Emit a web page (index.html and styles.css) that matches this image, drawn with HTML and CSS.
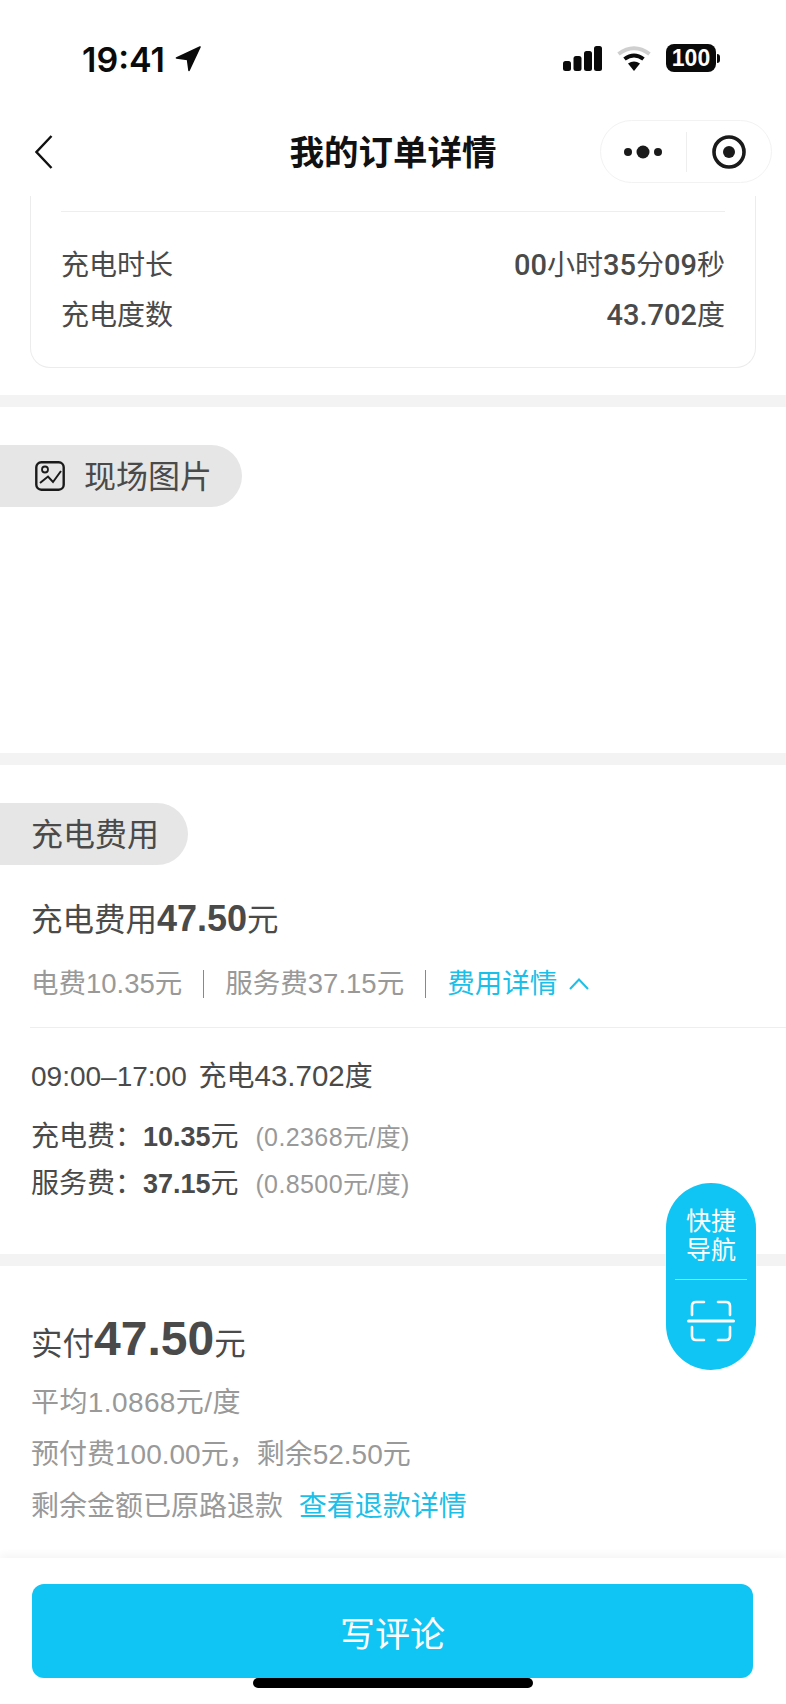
FILE: index.html
```html
<!DOCTYPE html>
<html lang="zh-CN">
<head>
    <meta charset="UTF-8">
    <meta name="viewport" content="width=device-width, initial-scale=1.0">
    <title>我的订单详情</title>
    <link rel="stylesheet" href="styles.css">
</head>
<body>
    <div class="phone">
        <div class="status-bar">
            <div class="status-time">
                <span>19:41</span>
                <svg class="icon-location" viewBox="0 0 26 26"><path d="M25 1 L1.500 12 L12.500 13.500 L14 24.500 Z" fill="#0a0a0a" stroke="#0a0a0a" stroke-width="1.600" stroke-linejoin="round"/></svg>
            </div>
            <div class="status-icons">
                <svg class="icon-signal" viewBox="0 0 39 25">
                    <rect x="0" y="15" width="8" height="10" rx="2.5" fill="#0a0a0a"/>
                    <rect x="10.500" y="10" width="8" height="15" rx="2.5" fill="#0a0a0a"/>
                    <rect x="21" y="5" width="8" height="20" rx="2.5" fill="#0a0a0a"/>
                    <rect x="31" y="0" width="8" height="25" rx="2.5" fill="#0a0a0a"/>
                </svg>
                <svg class="icon-wifi" viewBox="0 0 34 25">
                    <path d="M1.500 8 Q17 -3.500 32.500 8" fill="none" stroke="#cfcfcf" stroke-width="4"/>
                    <path d="M7.500 13 Q17 6 26.500 13" fill="none" stroke="#0a0a0a" stroke-width="4"/>
                    <path d="M11 17.500 Q17 13.500 23 17.500 L17 25 Z" fill="#0a0a0a"/>
                </svg>
                <div class="battery">
                    <span class="battery-body">100</span>
                    <span class="battery-nub"></span>
                </div>
            </div>
        </div>

        <div class="nav-bar">
            <svg class="icon-back" viewBox="0 0 18 34"><path d="M16.500 1 L1.500 17 L16.500 33" fill="none" stroke="#111" stroke-width="2.4"/></svg>
            <div class="nav-title">我的订单详情</div>
            <div class="capsule">
                <div class="capsule-part">
                    <svg class="icon-dots" viewBox="0 0 38 14">
                        <circle cx="4" cy="7" r="4" fill="#1a1a1a"/>
                        <circle cx="19" cy="7" r="6.500" fill="#1a1a1a"/>
                        <circle cx="34" cy="7" r="4" fill="#1a1a1a"/>
                    </svg>
                </div>
                <div class="capsule-line"></div>
                <div class="capsule-part">
                    <svg class="icon-target" viewBox="0 0 34 34">
                        <circle cx="17" cy="17" r="15" fill="none" stroke="#1a1a1a" stroke-width="3.600"/>
                        <circle cx="17" cy="17" r="6" fill="#1a1a1a"/>
                    </svg>
                </div>
            </div>
        </div>

        <div class="content">
            <section class="section section-charge">
                <div class="charge-card">
                    <div class="card-line"></div>
                    <div class="card-row">
                        <span>充电时长</span>
                        <span class="card-value"><b>00</b>小时<b>35</b>分<b>09</b>秒</span>
                    </div>
                    <div class="card-row">
                        <span>充电度数</span>
                        <span class="card-value"><b>43.702</b>度</span>
                    </div>
                </div>
            </section>

            <section class="section section-photo">
                <div class="pill pill-photo">
                    <svg class="icon-photo" viewBox="0 0 30 30">
                        <rect x="1.300" y="1.300" width="27.400" height="27.400" rx="5" fill="none" stroke="#1a1a1a" stroke-width="2.400"/>
                        <circle cx="10" cy="8.500" r="3" fill="none" stroke="#1a1a1a" stroke-width="1.800"/>
                        <path d="M5 22 L13 15.500 L18 21 L26 10" fill="none" stroke="#1a1a1a" stroke-width="2"/>
                    </svg>
                    <span>现场图片</span>
                </div>
            </section>

            <section class="section section-fee">
                <div class="pill pill-fee">充电费用</div>
                <div class="fee-total">充电费用<b>47.50</b>元</div>
                <div class="fee-sub">
                    <span>电费10.35元</span>
                    <i class="fee-sep"></i>
                    <span>服务费37.15元</span>
                    <i class="fee-sep"></i>
                    <span class="link">费用详情</span>
                    <svg class="icon-up" viewBox="0 0 20 12"><path d="M1 11 L10 1.500 L19 11" fill="none" stroke="#1cbfe8" stroke-width="2"/></svg>
                </div>
                <div class="fee-line"></div>
                <div class="fee-period">09:00–17:00 充电<span class="fee-kwh">43.702</span>度</div>
                <div class="fee-item fee-item-first">
                    <span>充电费：</span><b>10.35</b>元
                    <span class="fee-rate">(0.2368元/度)</span>
                </div>
                <div class="fee-item">
                    <span>服务费：</span><b>37.15</b>元
                    <span class="fee-rate">(0.8500元/度)</span>
                </div>
            </section>

            <section class="section-paid">
                <div class="paid-total">实付<b>47.50</b>元</div>
                <div class="paid-row paid-avg">平均1.0868元/度</div>
                <div class="paid-row">预付费100.00元，剩余52.50元</div>
                <div class="paid-row">
                    <span>剩余金额已原路退款</span>
                    <span class="link paid-link">查看退款详情</span>
                </div>
            </section>
        </div>

        <div class="footer">
            <button class="comment-btn">写评论</button>
        </div>

        <div class="home-bar"></div>

        <div class="quick-nav">
            <div class="quick-text">快捷<br>导航</div>
            <div class="quick-line"></div>
            <svg class="icon-scan" viewBox="0 0 48 42">
                <path d="M5 15 V6 Q5 2 9 2 H17 M31 2 H39 Q43 2 43 6 V15 M5 27 V36 Q5 40 9 40 H17 M31 40 H39 Q43 40 43 36 V27" fill="none" stroke="#fff" stroke-width="2.600" stroke-linecap="round"/>
                <path d="M1.500 21 H46.500" fill="none" stroke="#fff" stroke-width="3" stroke-linecap="round"/>
            </svg>
        </div>
    </div>
</body>
</html>
```

FILE: styles.css
```css
* {
    box-sizing: border-box;
}

body {
    margin: 0;
    background: #fff;
    color: #4a4a4a;
    font-family: "Liberation Sans", "Noto Sans CJK SC", sans-serif;
    font-size: 28px;
}

b {
    font-weight: 700;
}

.phone {
    position: relative;
    width: 786px;
    height: 1704px;
    display: flex;
    flex-direction: column;
    overflow: hidden;
}

.status-bar {
    height: 104px;
    padding: 40px 66px 26px 82px;
    display: flex;
    align-items: center;
    justify-content: space-between;
}

.status-time {
    display: flex;
    align-items: center;
    gap: 10px;
    color: #0a0a0a;
    font-family: Inter, "Liberation Sans", sans-serif;
    font-size: 34px;
    font-weight: 600;
}

.icon-location {
    width: 26px;
    height: 26px;
}

.status-icons {
    margin-bottom: 2px;
    display: flex;
    align-items: center;
    gap: 15px;
}

.icon-signal {
    width: 39px;
    height: 25px;
}

.icon-wifi {
    width: 34px;
    height: 25px;
}

.battery {
    display: flex;
    align-items: center;
    gap: 1px;
}

.battery-body {
    width: 50px;
    height: 28px;
    border-radius: 8px;
    background: #0a0a0a;
    color: #fff;
    font-size: 23px;
    font-weight: 700;
    line-height: 28px;
    text-align: center;
}

.battery-nub {
    width: 3px;
    height: 9px;
    border-radius: 0 3px 3px 0;
    background: #0a0a0a;
}

.nav-bar {
    height: 92px;
    padding: 16px 14px 0;
    display: grid;
    grid-template-columns: 1fr auto 1fr;
    align-items: start;
}

.icon-back {
    width: 18px;
    height: 34px;
    margin: 15px 0 0 21px;
}

.nav-title {
    color: #111;
    font-size: 34.5px;
    font-weight: 600;
    line-height: 66px;
}

.capsule {
    justify-self: end;
    width: 172px;
    height: 63px;
    border: 1px solid #f2f2f2;
    border-radius: 32px;
    display: flex;
    align-items: center;
}

.capsule-part {
    flex: 1;
    display: flex;
    align-items: center;
    justify-content: center;
}

.capsule-line {
    width: 1px;
    height: 40px;
    background: #eee;
}

.icon-dots {
    width: 38px;
    height: 14px;
}

.icon-target {
    width: 34px;
    height: 34px;
}

.content {
    flex: 1;
    overflow: hidden;
}

.section {
    border-bottom: 12px solid #f3f3f3;
}

.section-charge {
    padding: 0 30px 27px;
}

.charge-card {
    height: 172px;
    padding: 15px 30px 0;
    border: 1px solid #ececec;
    border-top: none;
    border-radius: 0 0 20px 20px;
}

.card-line {
    height: 1px;
    margin-bottom: 26px;
    background: #eee;
}

.card-row {
    height: 50px;
    display: flex;
    align-items: center;
    justify-content: space-between;
}

.card-value b {
    font-family: Roboto, "Liberation Sans", sans-serif;
    font-size: 29px;
    font-weight: 500;
}

.section-photo {
    height: 358px;
    padding-top: 38px;
}

.pill {
    height: 62px;
    padding-bottom: 4px;
    border-radius: 0 31px 31px 0;
    background: #e6e6e6;
    display: flex;
    align-items: center;
    font-size: 32px;
}

.pill-photo {
    width: 242px;
    padding-left: 35px;
    gap: 19px;
}

.icon-photo {
    width: 30px;
    height: 30px;
    margin-top: 4px;
}

.pill-fee {
    width: 188px;
    padding-left: 31px;
}

.section-fee {
    padding: 38px 0 50px;
}

.fee-total {
    height: 46px;
    margin: 31px 0 0 31px;
    font-size: 31.5px;
    line-height: 46px;
}

.fee-total b {
    font-size: 36px;
}

.fee-sub {
    height: 40px;
    margin: 22px 0 0 31px;
    display: flex;
    align-items: center;
    color: #999;
    font-size: 27.5px;
    line-height: 40px;
}

.fee-sep {
    width: 1px;
    height: 28px;
    margin: 0 21px;
    background: #888;
}

.link {
    color: #1cbfe8;
}

.icon-up {
    width: 20px;
    height: 12px;
    margin-left: 12px;
}

.fee-line {
    height: 1px;
    margin: 23px 0 0 30px;
    background: #eee;
}

.fee-period {
    height: 40px;
    margin: 28px 0 0 31px;
    line-height: 40px;
    word-spacing: 4px;
}

.fee-kwh {
    font-size: 29.5px;
}

.fee-item {
    height: 40px;
    margin: 7px 0 0 31px;
    line-height: 40px;
}

.fee-item b {
    font-size: 27px;
}

.fee-item-first {
    margin-top: 21px;
}

.fee-rate {
    margin-left: 9px;
    color: #999;
    font-size: 25px;
    letter-spacing: 0.4px;
}

.section-paid {
    padding: 43px 0 0 31px;
}

.paid-total {
    height: 62px;
    font-size: 31.5px;
    line-height: 60px;
}

.paid-total b {
    font-size: 48px;
}

.paid-row {
    height: 40px;
    margin-top: 12px;
    color: #999;
    line-height: 40px;
}

.paid-avg {
    letter-spacing: 0.4px;
}

.paid-link {
    margin-left: 8px;
}

.footer {
    height: 146px;
    padding: 26px 33px 0 32px;
    background: #fff;
    box-shadow: 0 -4px 8px rgba(0, 0, 0, 0.04);
}

.comment-btn {
    display: block;
    width: 100%;
    height: 94px;
    border: none;
    border-radius: 12px;
    background: #10c5f3;
    color: #fff;
    font-family: inherit;
    font-size: 35px;
}

.home-bar {
    position: absolute;
    left: 253px;
    top: 1678px;
    width: 280px;
    height: 10px;
    border-radius: 5px;
    background: #000;
}

.quick-nav {
    position: absolute;
    left: 666px;
    top: 1183px;
    width: 90px;
    height: 187px;
    padding-top: 24px;
    border-radius: 45px;
    background: #10c5f3;
    display: flex;
    flex-direction: column;
    align-items: center;
}

.quick-text {
    color: #fff;
    font-size: 25px;
    line-height: 29px;
    text-align: center;
}

.quick-line {
    width: 72px;
    height: 1px;
    margin: 14px 0 20px;
    background: rgba(255, 255, 255, 0.5);
}

.icon-scan {
    width: 48px;
    height: 42px;
}
```
